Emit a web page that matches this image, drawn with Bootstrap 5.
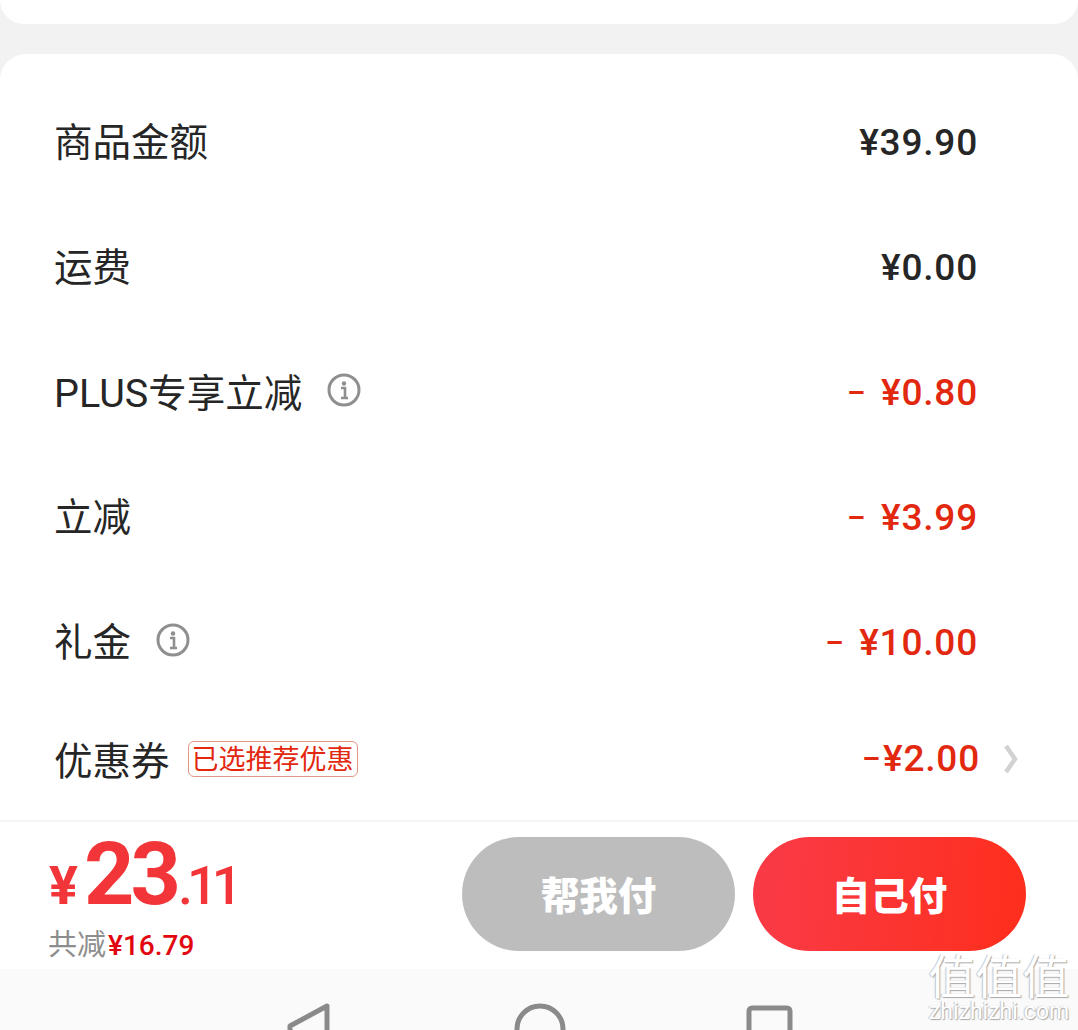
<!DOCTYPE html>
<html lang="zh-CN">
  <head>
    <meta charset="UTF-8" />
    <meta name="viewport" content="width=device-width, initial-scale=1.0" />
    <title>订单结算</title>
    <link href="https://cdn.jsdelivr.net/npm/bootstrap@5.3.0/dist/css/bootstrap.min.css" rel="stylesheet" />
    <style>
      html, body { height: 1030px; overflow: hidden; }
      body {
        background-color: #f2f2f2;
        color: #262626;
        font-family: "Roboto", "Noto Sans CJK SC", sans-serif;
      }
      .page-wrap { height: 1030px; position: relative; }
      .top-stub { height: 24px; background: #fff; border-radius: 0 0 26px 26px; }
      .price-panel { height: 766px; margin-top: 30px; background: #fff; border-radius: 26px 26px 0 0; padding-top: 26px; }
      .price-row { height: 125px; padding: 0 100px 0 54px; font-size: 38px; line-height: 1; }
      .price-row.last-row { height: 107px; padding-right: 59px; }
      .row-label { font-family: "Noto Sans CJK SC", sans-serif; font-size: 38.5px; margin-bottom: 6px; }
      .last-row .row-label, .plus-label.row-label { margin-bottom: 0; }
      .row-label .latin { font-family: "Roboto", sans-serif; font-size: 39.5px; }
      .row-value { font-weight: 500; font-size: 37px; letter-spacing: .8px; }
      .is-red { color: #e2280f; }
      .minus { font-size: 28px; font-weight: 700; margin-right: 16px; vertical-align: 3px; letter-spacing: 0; }
      .minus-tight { font-size: 28px; font-weight: 700; vertical-align: 3px; letter-spacing: 0; margin-right: 3px; }
      .info-ico { width: 34px; height: 34px; margin: 0 0 6px 25px; }
      .rec-tag {
        margin-left: 18px; height: 36px; padding: 0 3px; border: 1px solid #e39683; border-radius: 6px;
        color: #e2280f; font-size: 27px; line-height: 31px; font-family: "Noto Sans CJK SC", sans-serif;
      }
      .chev { width: 16px; height: 32px; margin-left: 23px; }
      .pay-bar { height: 149px; background: #fff; border-top: 2px solid #f5f5f5; padding: 15px 52px 0 49px; }
      .total-main { color: #f23538; font-weight: 700; line-height: 1; height: 84px; margin-top: -7px; }
      .yen-big { font-size: 54px; margin-right: 6px; font-weight: 700; }
      .num-big { font-size: 88px; font-weight: 700; letter-spacing: -4px; }
      .num-cents { font-size: 54px; font-weight: 500; letter-spacing: -6px; margin-left: 1px; }
      .saved-line { font-size: 29px; line-height: 1; margin: 14px 0 0 -1px; color: #8d8d8d; font-family: "Noto Sans CJK SC", sans-serif; }
      .saved-line b { color: #e1060f; font-family: "Roboto", sans-serif; font-weight: 500; font-size: 28px; margin-left: 2px; }
      .pay-btn {
        width: 273px; height: 114px; border: 0; border-radius: 57px; color: #fff;
        font-size: 38.5px; font-weight: 900; font-family: "Noto Sans CJK SC", sans-serif;
      }
      .btn-help { background: #bdbdbd; }
      .btn-self { background: linear-gradient(95deg, #f93b48, #fe2e1c); }
      .btn-gap { gap: 18px; }
      .sys-nav { height: 61px; background: #fafafa; overflow: hidden; }
      .sys-nav svg { display: block; }
      .mark-wm {
        position: absolute; right: 8px; top: 950px; width: 142px; text-align: center; color: #fff;
        font-family: "Noto Sans CJK SC", sans-serif; line-height: 1; text-shadow: 1px 1px 1px #a8a8a8, -1px 0 1px #c4c4c4;
      }
      .mark-wm .wm-zh { font-size: 47px; font-weight: 400; }
      .mark-wm .wm-en { font-size: 23px; font-family: "Roboto", sans-serif; margin-top: 3px; }
    </style>
  </head>
  <body>
    <div class="page-wrap d-flex flex-column">
      <div class="top-stub"></div>
      <div class="price-panel">
        <div class="price-row d-flex align-items-center justify-content-between">
          <span class="row-label">商品金额</span><span class="row-value">¥39.90</span>
        </div>
        <div class="price-row d-flex align-items-center justify-content-between">
          <span class="row-label">运费</span><span class="row-value">¥0.00</span>
        </div>
        <div class="price-row d-flex align-items-center justify-content-between">
          <span class="d-flex align-items-center">
            <span class="row-label plus-label"><span class="latin">PLUS</span>专享立减</span>
            <svg class="info-ico" viewBox="0 0 34 34"><circle cx="17" cy="17" r="15" fill="none" stroke="#8f8f8f" stroke-width="3"/><circle cx="17" cy="10.5" r="2.2" fill="#8f8f8f"/><path d="M14 15h4v10M14 25h7" fill="none" stroke="#8f8f8f" stroke-width="2.6"/></svg>
          </span>
          <span class="row-value is-red"><span class="minus">–</span>¥0.80</span>
        </div>
        <div class="price-row d-flex align-items-center justify-content-between">
          <span class="row-label">立减</span><span class="row-value is-red"><span class="minus">–</span>¥3.99</span>
        </div>
        <div class="price-row d-flex align-items-center justify-content-between">
          <span class="d-flex align-items-center">
            <span class="row-label">礼金</span>
            <svg class="info-ico" viewBox="0 0 34 34"><circle cx="17" cy="17" r="15" fill="none" stroke="#8f8f8f" stroke-width="3"/><circle cx="17" cy="10.5" r="2.2" fill="#8f8f8f"/><path d="M14 15h4v10M14 25h7" fill="none" stroke="#8f8f8f" stroke-width="2.6"/></svg>
          </span>
          <span class="row-value is-red"><span class="minus">–</span>¥10.00</span>
        </div>
        <div class="price-row last-row d-flex align-items-center justify-content-between">
          <span class="d-flex align-items-center">
            <span class="row-label">优惠券</span><span class="rec-tag">已选推荐优惠</span>
          </span>
          <span class="d-flex align-items-center">
            <span class="row-value is-red"><span class="minus-tight">–</span>¥2.00</span>
            <svg class="chev" viewBox="0 0 16 32"><path d="M3 3l9 13-9 13" fill="none" stroke="#d2d2d2" stroke-width="4.5"/></svg>
          </span>
        </div>
      </div>
      <div class="pay-bar d-flex justify-content-between">
        <div>
          <div class="total-main d-flex align-items-baseline">
            <span class="yen-big">¥</span><span class="num-big">23</span><span class="num-cents">.11</span>
          </div>
          <div class="saved-line">共减<b>¥16.79</b></div>
        </div>
        <div class="d-flex btn-gap">
          <button class="pay-btn btn-help" type="button">帮我付</button>
          <button class="pay-btn btn-self" type="button">自己付</button>
        </div>
      </div>
      <div class="sys-nav">
        <svg width="1078" height="61" viewBox="0 0 1078 61">
          <path d="M327 37L290 57V90L327 110Z" fill="none" stroke="#8a8a8a" stroke-width="5" stroke-linejoin="round"/>
          <circle cx="540" cy="60" r="23" fill="none" stroke="#8a8a8a" stroke-width="5"/>
          <rect x="749" y="39" width="41" height="60" rx="3" fill="none" stroke="#8a8a8a" stroke-width="5"/>
        </svg>
      </div>
      <div class="mark-wm">
        <div class="wm-zh">值值值</div>
        <div class="wm-en">zhizhizhi.com</div>
      </div>
    </div>
    <script src="https://cdn.jsdelivr.net/npm/bootstrap@5.3.0/dist/js/bootstrap.bundle.min.js"></script>
  </body>
</html>
